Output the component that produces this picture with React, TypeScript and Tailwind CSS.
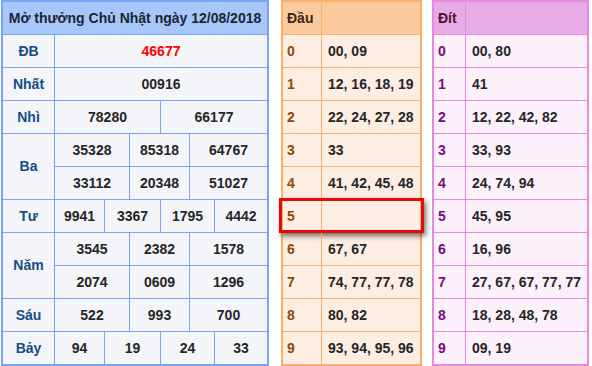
import React from "react";

type Row = { cells: string[]; widths: number[] };

const groups: { label: string; rows: Row[] }[] = [
  { label: "ĐB", rows: [{ cells: ["46677"], widths: [] }] },
  { label: "Nhất", rows: [{ cells: ["00916"], widths: [] }] },
  { label: "Nhì", rows: [{ cells: ["78280", "66177"], widths: [106] }] },
  {
    label: "Ba",
    rows: [
      { cells: ["35328", "85318", "64767"], widths: [75, 60] },
      { cells: ["33112", "20348", "51027"], widths: [75, 60] },
    ],
  },
  { label: "Tư", rows: [{ cells: ["9941", "3367", "1795", "4442"], widths: [50, 56, 54] }] },
  {
    label: "Năm",
    rows: [
      { cells: ["3545", "2382", "1578"], widths: [75, 60] },
      { cells: ["2074", "0609", "1296"], widths: [75, 60] },
    ],
  },
  { label: "Sáu", rows: [{ cells: ["522", "993", "700"], widths: [75, 60] }] },
  { label: "Bảy", rows: [{ cells: ["94", "19", "24", "33"], widths: [50, 56, 54] }] },
];

const dau = ["00, 09", "12, 16, 18, 19", "22, 24, 27, 28", "33", "41, 42, 45, 48", "", "67, 67", "74, 77, 77, 78", "80, 82", "93, 94, 95, 96"];
const dit = ["00, 80", "41", "12, 22, 42, 82", "33, 93", "24, 74, 94", "45, 95", "16, 96", "27, 67, 67, 77, 77", "18, 28, 48, 78", "09, 19"];

const ResultTable = () => (
  <div className="ml-[1px] w-[268px] h-[366px] border-2 border-[#78a6f5] bg-[#f4f5f9] flex flex-col">
    <div className="h-[33px] shrink-0 border-b border-[#78a6f5] bg-[#a7c6f9] flex items-center justify-center text-[#1a2535]">
      Mở thưởng Chủ Nhật ngày 12/08/2018
    </div>
    {groups.map((g, gi) => {
      const last = gi === groups.length - 1;
      return (
        <div
          key={g.label}
          className={`flex shrink-0 ${last ? "h-[32px]" : "border-b border-[#78a6f5]"}`}
          style={last ? undefined : { height: g.rows.length * 33 }}
        >
          <div className="w-[52px] shrink-0 border-r border-[#78a6f5] flex items-center justify-center text-[#154c85]">
            {g.label}
          </div>
          <div className="flex-1 flex flex-col">
            {g.rows.map((r, ri) => (
              <div
                key={ri}
                className={`flex-1 flex ${ri < g.rows.length - 1 ? "border-b border-[#78a6f5]" : ""}`}
              >
                {r.cells.map((c, ci) => {
                  const isLast = ci === r.cells.length - 1;
                  return (
                    <div
                      key={ci}
                      className={`flex items-center justify-center ${isLast ? "flex-1" : "shrink-0 border-r border-[#78a6f5]"} ${g.label === "ĐB" ? "text-[#ff0000]" : "text-[#262626]"}`}
                      style={isLast ? undefined : { width: r.widths[ci] }}
                    >
                      {c}
                    </div>
                  );
                })}
              </div>
            ))}
          </div>
        </div>
      );
    })}
  </div>
);

const DauTable = () => (
  <div className="ml-[12px] w-[141px] h-[366px] border-2 border-[#f8b06d] bg-[#fdede2] flex flex-col">
    <div className="h-[33px] shrink-0 flex bg-[#fbca9c] border-b border-[#f8b06d]">
      <div className="w-[39px] border-r border-[#f8b06d] pl-[4px] flex items-center text-[#402510]">Đầu</div>
      <div className="flex-1" />
    </div>
    {dau.map((v, i) => (
      <div
        key={i}
        className={`relative flex shrink-0 ${i === 9 ? "h-[32px]" : "h-[33px] border-b border-[#f8b06d]"}`}
      >
        <div className="w-[39px] border-r border-[#f8b06d] pl-[4px] flex items-center text-[#8b4a0a]">{i}</div>
        <div className="flex-1 pl-[6px] flex items-center text-[#262626]">{v}</div>
        {i === 5 && (
          <div className="absolute left-[-4px] right-[-4px] top-[-2px] bottom-[-1px] border-[3px] border-[#e80a0a] shadow-[2px_3px_5px_rgba(0,0,0,0.55)]" />
        )}
      </div>
    ))}
  </div>
);

const DitTable = () => (
  <div className="ml-[10px] w-[157px] h-[366px] border-2 border-[#e58ae0] bg-[#fcf0fa] flex flex-col">
    <div className="h-[33px] shrink-0 flex bg-[#e7abe6] border-b border-[#e58ae0]">
      <div className="w-[32px] border-r border-[#e58ae0] pl-[4px] flex items-center text-[#4a1530]">Đít</div>
      <div className="flex-1" />
    </div>
    {dit.map((v, i) => (
      <div
        key={i}
        className={`flex shrink-0 ${i === 9 ? "h-[32px]" : "h-[33px] border-b border-[#e58ae0]"}`}
      >
        <div className="w-[32px] border-r border-[#e58ae0] pl-[4px] flex items-center text-[#7b0a80]">{i}</div>
        <div className="flex-1 pl-[6px] flex items-center text-[#262626]">{v}</div>
      </div>
    ))}
  </div>
);

export default function App() {
  return (
    <div className="w-[592px] h-[366px] bg-white flex font-['Liberation_Sans',Arial,sans-serif] font-bold text-[14px] overflow-hidden">
      <ResultTable />
      <DauTable />
      <DitTable />
    </div>
  );
}
